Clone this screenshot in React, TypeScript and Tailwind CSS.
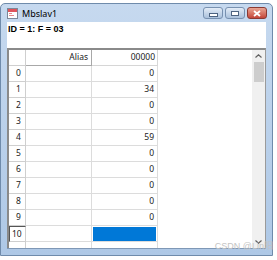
import React from 'react'

const values = ['0', '34', '0', '0', '59', '0', '0', '0', '0', '0', '']

function TitleIcon() {
  return (
    <svg width="11" height="11" viewBox="0 0 11 11">
      <rect x="0.5" y="0.5" width="10" height="10" fill="#fff" stroke="#7b8899" />
      <rect x="1" y="1" width="9" height="3" fill="#e0555d" />
      <rect x="2" y="5" width="3" height="1" fill="#e48a8f" />
      <rect x="2" y="7" width="5" height="1" fill="#e48a8f" />
    </svg>
  )
}

function CaptionButton({ kind }: { kind: 'min' | 'max' | 'close' }) {
  const base =
    kind === 'close'
      ? 'bg-gradient-to-b from-[#e8a493] to-[#c4453a] border-[#8a3a33]'
      : 'bg-gradient-to-b from-[#e3ecf7] to-[#aac1dc] border-[#7891b0]'
  return (
    <div className={`w-[20px] h-[12px] rounded-[3px] border flex items-center justify-center ${base}`}>
      {kind === 'min' && <div className="w-[7px] h-[2px] bg-white border border-[#4d6482] mt-[4px] box-content" />}
      {kind === 'max' && <div className="w-[6px] h-[3px] bg-white border border-[#4d6482] box-content" />}
      {kind === 'close' && (
        <svg width="8" height="7" viewBox="0 0 8 7">
          <path d="M1 1 L7 6 M7 1 L1 6" stroke="#fff" strokeWidth="1.8" />
        </svg>
      )}
    </div>
  )
}

export default function App() {
  return (
    <div className="w-[277px] h-[260px] bg-white relative overflow-hidden font-['Noto_Sans',sans-serif]">
      <div className="mt-[3px] w-[273px] h-[253px] flex flex-col border border-[#6f8bab] rounded-t-[5px] bg-gradient-to-b from-[#c6d9ef] to-[#aec8e6]">
        {/* title bar */}
        <div className="h-[18px] flex items-center pl-[6px] pr-[5px]">
          <TitleIcon />
          <span className="ml-[4px] text-[9px] text-black leading-none">Mbslav1</span>
          <div className="ml-auto flex gap-[2px]">
            <CaptionButton kind="min" />
            <CaptionButton kind="max" />
            <CaptionButton kind="close" />
          </div>
        </div>

        {/* client */}
        <div className="flex-1 mx-[6px] mb-[6px] bg-white flex flex-col border-b border-[#7f98b6]">
          <div className="h-[26px] pl-[1px] pt-[3px] text-[9px] font-bold leading-none text-black font-['Liberation_Sans',Arial,sans-serif]">
            ID = 1: F = 03
          </div>

          <div className="flex-1 flex border-t-2 border-l-2 border-r border-t-[#8a8a8a] border-l-[#8a8a8a] border-r-[#9a9a9a] overflow-hidden">
            <div className="flex-1 flex flex-col text-[8.5px] leading-none text-[#222]">
              {/* header row */}
              <div className="flex h-[16px] shrink-0">
                <div className="w-[17px] border-r border-b border-[#cfcfcf]" />
                <div className="w-[66px] border-r border-b border-[#a8a8a8] flex items-center justify-end pr-[3px]">
                  Alias
                </div>
                <div className="w-[66px] border-r border-b border-[#d6d6d6] flex items-center justify-end pr-[2px]">
                  00000
                </div>
              </div>

              {values.map((v, i) => (
                <div key={i} className="flex h-[16px] shrink-0">
                  <div
                    className={
                      i === 10
                        ? 'w-[17px] border-r border-b border-[#cfcfcf] border-l border-t border-l-[#555] border-t-[#555] flex items-center pl-[2px]'
                        : 'w-[17px] border-r border-b border-[#cfcfcf] flex items-center pl-[7px]'
                    }
                  >
                    {i}
                  </div>
                  <div className="w-[66px] border-r border-b border-[#dcdcdc]" />
                  <div className="w-[66px] border-r border-b border-[#dcdcdc] flex items-center justify-end pr-[3px]">
                    {i === 10 ? <div className="w-[63px] h-[14px] bg-[#0078d7] mr-[-2px]" /> : v}
                  </div>
                </div>
              ))}

              <div className="flex flex-1">
                <div className="w-[17px] border-r border-[#cfcfcf]" />
                <div className="w-[66px] border-r border-[#dcdcdc]" />
                <div className="w-[66px] border-r border-[#dcdcdc]" />
              </div>
            </div>

            {/* scrollbar */}
            <div className="w-[13px] bg-[#f0f0f0] flex flex-col items-center">
              <div className="h-[12px] flex items-center justify-center">
                <svg width="7" height="4" viewBox="0 0 7 4">
                  <path d="M0.5 3.5 L3.5 0.8 L6.5 3.5" fill="none" stroke="#606060" strokeWidth="1.2" />
                </svg>
              </div>
              <div className="w-[10px] h-[20px] bg-[#cdcdcd]" />
              <div className="flex-1" />
              <div className="h-[12px] flex items-center justify-center">
                <svg width="7" height="4" viewBox="0 0 7 4">
                  <path d="M0.5 0.5 L3.5 3.2 L6.5 0.5" fill="none" stroke="#606060" strokeWidth="1.2" />
                </svg>
              </div>
            </div>
          </div>
        </div>
      </div>

      <div className="absolute right-[4px] bottom-[9px] text-[9px] leading-none text-[#c4c4c4] font-['Liberation_Sans','Noto_Sans_CJK_SC',sans-serif]">
        CSDN @Lin阳
      </div>
    </div>
  )
}
